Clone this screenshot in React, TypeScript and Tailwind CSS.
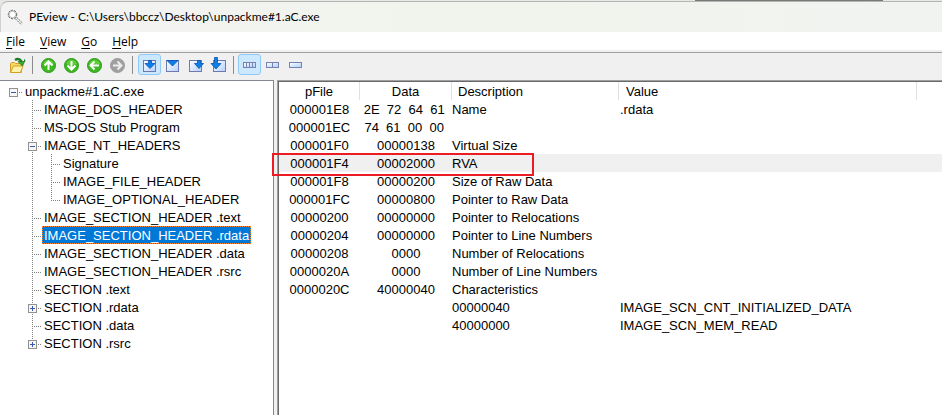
import type { ReactNode } from "react";

/* ---------- toolbar drawings ---------- */

function AppIcon() {
  return (
    <svg width="17" height="17" viewBox="0 0 17 17" fill="none" aria-hidden="true">
      <circle cx="5.500" cy="5.500" r="4.200" stroke="#444" strokeWidth="1" strokeDasharray="2 1" />
      <circle cx="5.500" cy="5.500" r="3.300" fill="#fff" stroke="#999" strokeWidth="0.6" />
      <path d="M9 9l6 6" stroke="#666" strokeWidth="2.600" strokeDasharray="2 0.8" />
      <path d="M9 9l6 6" stroke="#f4f4f4" strokeWidth="1.3" />
    </svg>
  );
}

function OpenIcon() {
  return (
    <svg width="17" height="17" viewBox="0 0 17 17" aria-hidden="true">
      <path d="M1.500 15.500V6.500l1-1h3l1 1h6v9z" fill="#f8d860" stroke="#d0a028" />
      <path d="M1.500 15.500l3-6.500h9.500l-2.500 6.500z" fill="#fff2a8" stroke="#d0a028" />
      <path d="M6 3Q10 .5 12.500 4.500" fill="none" stroke="#1d7a24" strokeWidth="2.4" />
      <path d="M9 4.500h6.500v-2l.5 1-2.500 5.500z" fill="#3aa838" stroke="#1d7a24" strokeWidth="0.8" />
    </svg>
  );
}

function ArrowCircle({ turn, off = false }: { turn: number; off?: boolean }) {
  return (
    <svg width="17" height="17" viewBox="0 0 17 17" fill="none" aria-hidden="true">
      <circle cx="8.500" cy="8.500" r="7" fill={off ? "#a0a0a0" : "#3db820"} stroke={off ? "#9c9c9c" : "#2f9a1d"} />
      {!off && <path d="M3 7a5.800 5.800 0 0111 0q-5.500 2-11 0z" fill="#7ad84e" opacity="0.6" />}
      <path
        d="M8.500 13V5M4.500 8.500l4-4 4 4"
        stroke={off ? "#ededed" : "#fff"}
        strokeWidth="2"
        transform={`rotate(${turn} 8.500 8.500)`}
      />
    </svg>
  );
}

type Kind = "center" | "wide" | "right" | "left";

const arrows: Record<Kind, string> = {
  center: "M7.500 3.500h3v3h3.500l-5 5-5-5h3.500z",
  wide: "M3 3.500h11l-5.500 5.500z",
  right: "M10.500 3.500h3v3h3l-4.500 5-4.500-5h3z",
  left: "M4.500 .5h3v6h3.500l-5 5.500-5-5.500h3.500z",
};

function NodeIcon({ kind }: { kind: Kind }) {
  const x = kind === "left" ? 3 : 2;
  return (
    <svg width="17" height="17" viewBox="0 0 17 17" aria-hidden="true">
      <defs>
        <linearGradient id={`page-${kind}`} x1="0" y1="0" x2="1" y2="1">
          <stop offset="0" stopColor="#ffffff" />
          <stop offset="1" stopColor="#b4d0fa" />
        </linearGradient>
      </defs>
      <rect x={x + 0.5} y="3.500" width="12" height="11" fill={`url(#page-${kind})`} stroke="#7078b0" />
      <path d={arrows[kind]} fill="#0a80e8" stroke="#0850b0" strokeWidth="0.8" />
    </svg>
  );
}

function CellsIcon({ cuts }: { cuts: number[] }) {
  const id = `cell-${cuts.length}`;
  return (
    <svg width="13" height="7" viewBox="0 0 13 7" aria-hidden="true">
      <defs>
        <linearGradient id={id} x1="0" y1="0" x2="1" y2="1">
          <stop offset="0" stopColor="#ffffff" />
          <stop offset="1" stopColor="#a8d0f8" />
        </linearGradient>
      </defs>
      <rect x="0.5" y="0.5" width="12" height="5" fill={`url(#${id})`} stroke="#7880b4" />
      {cuts.map((c) => (
        <path key={c} d={`M${c}.5 0v6`} stroke="#7880b4" />
      ))}
    </svg>
  );
}

function ToolButton({ label, on = false, disabled = false, children }: { label: string; on?: boolean; disabled?: boolean; children: ReactNode }) {
  return (
    <button
      type="button"
      aria-label={label}
      disabled={disabled}
      className={
        on
          ? "flex h-[21px] w-[23px] items-center justify-center rounded-[3px] border border-[#90c8f6] bg-[#cce8ff] pt-[2px]"
          : "flex h-[21px] w-[23px] items-center justify-center border border-transparent pt-[2px]"
      }
    >
      {children}
    </button>
  );
}

function Separator() {
  return <div className="mt-[2px] mr-1 ml-[3px] h-[18px] w-px bg-[#8c8c8c]" />;
}

/* ---------- tree ---------- */

type Box = "plus" | "minus";
type Node = { text: string; guides: string[]; box?: Box; selected?: boolean };

// Guide codes: "i" full line, "t" line with branch, "l" last branch, "h" branch only, "n" nothing
const nodes: Node[] = [
  { text: "unpackme#1.aC.exe", guides: ["h"], box: "minus" },
  { text: "IMAGE_DOS_HEADER", guides: ["n", "t"] },
  { text: "MS-DOS Stub Program", guides: ["n", "t"] },
  { text: "IMAGE_NT_HEADERS", guides: ["n", "t"], box: "minus" },
  { text: "Signature", guides: ["n", "i", "t"] },
  { text: "IMAGE_FILE_HEADER", guides: ["n", "i", "t"] },
  { text: "IMAGE_OPTIONAL_HEADER", guides: ["n", "i", "l"] },
  { text: "IMAGE_SECTION_HEADER .text", guides: ["n", "t"] },
  { text: "IMAGE_SECTION_HEADER .rdata", guides: ["n", "t"], selected: true },
  { text: "IMAGE_SECTION_HEADER .data", guides: ["n", "t"] },
  { text: "IMAGE_SECTION_HEADER .rsrc", guides: ["n", "t"] },
  { text: "SECTION .text", guides: ["n", "t"] },
  { text: "SECTION .rdata", guides: ["n", "t"], box: "plus" },
  { text: "SECTION .data", guides: ["n", "t"] },
  { text: "SECTION .rsrc", guides: ["n", "l"], box: "plus" },
];

function Guide({ code, box }: { code: string; box?: Box }) {
  const down = code === "i" || code === "t" ? "M9.500 0V18" : code === "l" ? "M9.500 0V10" : "";
  return (
    <svg width="19" height="18" viewBox="0 0 19 18" shapeRendering="crispEdges" className="shrink-0" aria-hidden="true">
      <path d={down} stroke="#808080" strokeDasharray="1 1" />
      {code !== "i" && code !== "n" && <path d="M9 10.500H18" stroke="#808080" strokeDasharray="1 1" />}
      {box && (
        <>
          <rect x="5.500" y="6.500" width="8" height="8" fill="#f6f6f6" stroke="#919191" />
          <path d="M7 10.500h5" stroke="#3c5aa8" />
          {box === "plus" && <path d="M9.500 8v5" stroke="#3c5aa8" />}
        </>
      )}
    </svg>
  );
}

function Tree() {
  return (
    <ul role="tree" aria-label="File structure" className="pt-px pl-1">
      {nodes.map((n) => (
        <li key={n.text} role="treeitem" aria-selected={!!n.selected} className="flex h-[18px]">
          {n.guides.map((g, i) => {
            const last = i === n.guides.length - 1;
            return last && n.box ? (
              <button key={i} type="button" aria-label={n.box === "plus" ? "Expand" : "Collapse"}>
                <Guide code={g} box={n.box} />
              </button>
            ) : (
              <Guide key={i} code={g} />
            );
          })}
          <button
            type="button"
            className={
              n.selected
                ? "border border-dotted border-[#ff8728] bg-[#0078d7] px-px pt-[2px] leading-[14px] whitespace-nowrap text-white"
                : "border border-transparent px-px pt-[2px] leading-[14px] whitespace-nowrap"
            }
          >
            {n.text}
          </button>
        </li>
      ))}
    </ul>
  );
}

/* ---------- value table ---------- */

type Row = [string, string, string, string];

const rows: Row[] = [
  ["000001E8", "2E  72  64  61 ", "Name", ".rdata"],
  ["000001EC", "74  61  00  00 ", "", ""],
  ["000001F0", "00000138", "Virtual Size", ""],
  ["000001F4", "00002000", "RVA", ""],
  ["000001F8", "00000200", "Size of Raw Data", ""],
  ["000001FC", "00000800", "Pointer to Raw Data", ""],
  ["00000200", "00000000", "Pointer to Relocations", ""],
  ["00000204", "00000000", "Pointer to Line Numbers", ""],
  ["00000208", "0000", "Number of Relocations", ""],
  ["0000020A", "0000", "Number of Line Numbers", ""],
  ["0000020C", "40000040", "Characteristics", ""],
  ["", "", "00000040", "IMAGE_SCN_CNT_INITIALIZED_DATA"],
  ["", "", "40000000", "IMAGE_SCN_MEM_READ"],
];

function ValueTable() {
  return (
    <table className="w-full table-fixed border-separate border-spacing-0 leading-4">
      <colgroup>
        <col className="w-[81px]" />
        <col className="w-[92px]" />
        <col className="w-[167px]" />
        <col className="w-[298px]" />
        <col />
      </colgroup>
      <thead>
        <tr className="h-[18px]">
          <th className="border-r border-[#e0e0e0] p-0 pt-[2px] text-center font-normal">pFile</th>
          <th className="border-r border-[#e0e0e0] p-0 pt-[2px] text-center font-normal">Data</th>
          <th className="border-r border-[#e0e0e0] p-0 pt-[2px] pl-[6px] text-left font-normal">Description</th>
          <th className="border-r border-[#e0e0e0] p-0 pt-[2px] pl-[7px] text-left font-normal">Value</th>
          <td className="p-0" />
        </tr>
      </thead>
      <tbody>
        {rows.map((r, i) => {
          const marked = r[2] === "RVA";
          return (
            <tr key={i} className={marked ? "h-[18px] bg-[#f0f0f0]" : "h-[18px]"}>
              <td className="relative p-0 pt-[2px] text-center">
                {r[0]}
                {marked && (
                  <div className="pointer-events-none absolute -top-px -left-[7px] h-[23px] w-[262px] border-2 border-[#ed1c24]" />
                )}
              </td>
              <td className="p-0 pt-[2px] text-center whitespace-pre">{r[1]}</td>
              <td className="p-0 pt-[2px] whitespace-nowrap">{r[2]}</td>
              <td className="p-0 pt-[2px] pl-px whitespace-nowrap">{r[3]}</td>
              <td className="p-0" />
            </tr>
          );
        })}
      </tbody>
    </table>
  );
}

/* ---------- window ---------- */

const menus = ["File", "View", "Go", "Help"];

export default function App() {
  return (
    <div className="flex min-h-screen flex-col bg-[#e6e8e6] font-['Liberation_Sans',Arial,sans-serif] text-[13px] leading-[18px] text-black">
      <div className="flex h-px">
        <div className="ml-[695px] w-[188px] bg-[#777]" />
      </div>
      <header className="flex h-[31px] items-center gap-[5px] rounded-tl-lg border-t border-l border-t-[#b4b6b4] border-l-[#d0d0d0] bg-gradient-to-r from-[#f3f3f3] via-[#f1f4ec] to-[#f0f3f0] pl-[6px]">
        <AppIcon />
        <h1 className="font-['Lato','Noto_Sans',sans-serif] text-[12px] whitespace-nowrap">
          PEview - C:\Users\bbccz\Desktop\unpackme#1.aC.exe
        </h1>
      </header>
      <nav className="flex h-[18px] items-center gap-[15px] bg-white pt-[2px] pl-[6px] font-['Open_Sans','Noto_Sans',sans-serif] text-[12px]">
        {menus.map((m) => (
          <button key={m} type="button">
            <span className="underline underline-offset-2">{m[0]}</span>
            {m.slice(1)}
          </button>
        ))}
      </nav>
      <div className="h-[2px] bg-[#f0f0f0]" />
      <div role="toolbar" aria-label="Tools" className="flex h-[28px] items-start border-t border-[#a0a0a0] bg-[#f0f0f0] pt-px pl-[6px]">
        <ToolButton label="Open"><OpenIcon /></ToolButton>
        <Separator />
        <ToolButton label="Up"><ArrowCircle turn={0} /></ToolButton>
        <ToolButton label="Down"><ArrowCircle turn={180} /></ToolButton>
        <ToolButton label="Back"><ArrowCircle turn={270} /></ToolButton>
        <ToolButton label="Forward" disabled><ArrowCircle turn={90} off /></ToolButton>
        <Separator />
        <div className="flex pl-px">
          <ToolButton label="View center" on><NodeIcon kind="center" /></ToolButton>
          <ToolButton label="View wide"><NodeIcon kind="wide" /></ToolButton>
          <ToolButton label="View right"><NodeIcon kind="right" /></ToolButton>
          <ToolButton label="View left"><NodeIcon kind="left" /></ToolButton>
        </div>
        <Separator />
        <ToolButton label="Byte cells" on><CellsIcon cuts={[3, 6, 9]} /></ToolButton>
        <ToolButton label="Word cells"><CellsIcon cuts={[6]} /></ToolButton>
        <ToolButton label="Double word cells"><CellsIcon cuts={[]} /></ToolButton>
      </div>
      <main className="flex grow gap-[3px] bg-[#f0f0f0]">
        <section className="w-[274px] shrink-0 border-t border-r border-[#828790] bg-white">
          <Tree />
        </section>
        <section className="min-w-0 grow border-t border-l border-[#a0a0a0] bg-white">
          <div className="h-full border-t border-l border-[#696969]">
            <ValueTable />
          </div>
        </section>
      </main>
    </div>
  );
}
